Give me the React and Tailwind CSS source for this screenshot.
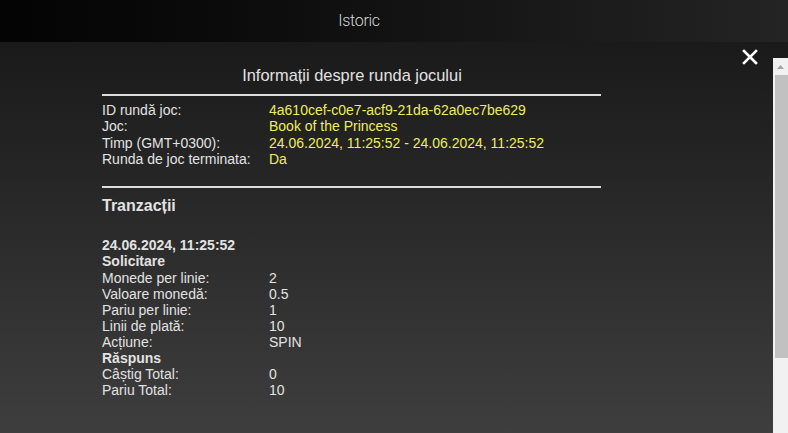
import React from 'react';

const info = [
    ['ID rundă joc:', '4a610cef-c0e7-acf9-21da-62a0ec7be629'],
    ['Joc:', 'Book of the Princess'],
    ['Timp (GMT+0300):', '24.06.2024, 11:25:52 - 24.06.2024, 11:25:52'],
    ['Runda de joc terminata:', 'Da'],
];

const request = [
    ['Monede per linie:', '2'],
    ['Valoare monedă:', '0.5'],
    ['Pariu per linie:', '1'],
    ['Linii de plată:', '10'],
    ['Acțiune:', 'SPIN'],
];

const response = [
    ['Câștig Total:', '0'],
    ['Pariu Total:', '10'],
];

const Row = ({ label, value, yellow }) => (
    <div className="flex">
        <div className="w-[167px] shrink-0">{label}</div>
        <div className={yellow ? 'text-[#eeee5a]' : ''}>{value}</div>
    </div>
);

const App = () => {
    return (
        <div className="w-[788px] h-[433px] flex flex-col overflow-hidden font-['Liberation_Sans',Arial,sans-serif]">
            {/* top bar */}
            <div className="h-[42px] shrink-0 flex items-center justify-center pr-[70px] bg-gradient-to-r from-[#040404] to-[#242424]">
                <span className="text-[16px] text-[#d8d8d8] font-['Roboto',sans-serif] font-light tracking-[-0.3px]">Istoric</span>
            </div>

            {/* body */}
            <div className="relative flex-1 flex bg-gradient-to-b from-[#1a1a1a] to-[#3e3e3e]">
                <button className="absolute right-[30px] top-[7px] text-white">
                    <svg width="16" height="16" viewBox="0 0 16 16" fill="none" stroke="currentColor" strokeWidth="2.6" strokeLinecap="square">
                        <path d="M2 2l12 12M14 2L2 14" />
                    </svg>
                </button>

                <div className="flex-1 pl-[102px]">
                    <div className="w-[499px] text-[#e2e2e2]">
                        <h1 className="pt-[24px] text-center text-[16.4px] leading-[19px] pl-[1px]">Informații despre runda jocului</h1>
                        <div className="mt-[9px] h-[2px] bg-[#dcdcdc]" />

                        <div className="mt-[6px] text-[14px] leading-[16.33px]">
                            {info.map(([l, v]) => (
                                <Row key={l} label={l} value={v} yellow />
                            ))}
                        </div>

                        <div className="mt-[19px] h-[2px] bg-[#dcdcdc]" />

                        <h2 className="mt-[9px] text-[16px] leading-[18px] font-bold">Tranzacții</h2>

                        <div className="mt-[22px] text-[14px] leading-[16.1px]">
                            <div className="font-bold">24.06.2024, 11:25:52</div>
                            <div className="font-bold">Solicitare</div>
                            {request.map(([l, v]) => (
                                <Row key={l} label={l} value={v} />
                            ))}
                            <div className="font-bold">Răspuns</div>
                            {response.map(([l, v]) => (
                                <Row key={l} label={l} value={v} />
                            ))}
                        </div>
                    </div>
                </div>

                {/* scrollbar */}
                <div className="w-[15px] shrink-0 mt-[16px] bg-[#f1f1f1] flex flex-col">
                    <div className="h-[17px] flex items-center justify-center">
                        <svg width="7" height="4" viewBox="0 0 7 4">
                            <path d="M3.5 0L7 4H0z" fill="#a3a3a3" />
                        </svg>
                    </div>
                    <div className="ml-[2px] h-[283px] bg-[#c1c1c1]" />
                </div>
            </div>
        </div>
    );
};

export default App;
